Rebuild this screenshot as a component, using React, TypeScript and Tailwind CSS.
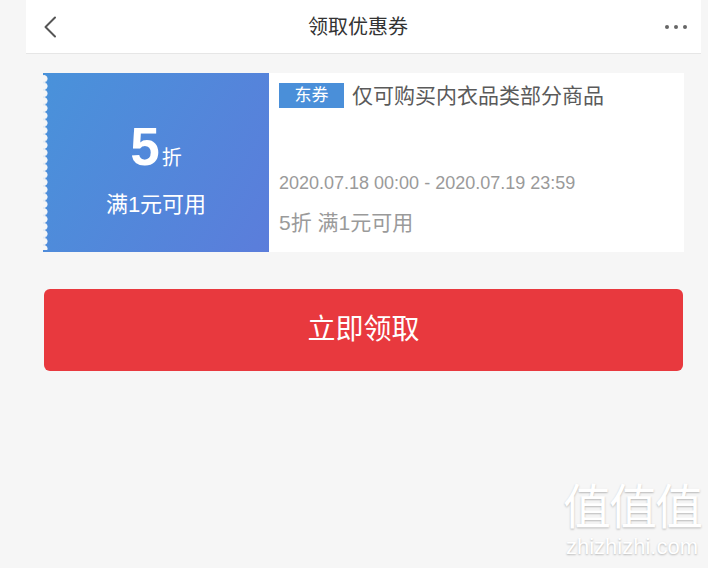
const cjk = "font-['Liberation_Sans','Noto_Sans_CJK_SC',sans-serif]";

export default function App() {
  return (
    <div className={`relative h-[568px] w-[708px] overflow-hidden bg-[#f6f6f6] ${cjk}`}>
      <div className="ml-[26px] w-[675px]">
        {/* Header */}
        <header className="flex h-[54px] items-center justify-between border-b border-[#e6e6e6] bg-white pl-[17px] pr-[14px]">
          <svg width="14" height="22" viewBox="0 0 14 22" fill="none" className="mt-[1px]">
            <polyline points="12,1.5 2.5,11 12,20.5" stroke="#555" strokeWidth="2" strokeLinecap="round" strokeLinejoin="round" />
          </svg>
          <h1 className="text-[20px] text-[#333]">领取优惠券</h1>
          <div className="flex w-[28px] items-center justify-end gap-[5px]">
            <span className="h-[4px] w-[4px] rounded-full bg-[#666]" />
            <span className="h-[4px] w-[4px] rounded-full bg-[#666]" />
            <span className="h-[4px] w-[4px] rounded-full bg-[#666]" />
          </div>
        </header>

        <div className="px-[17px] pt-[19px]">
          {/* Coupon */}
          <div className="flex h-[179px]">
            <div className="relative flex w-[226px] flex-col items-center justify-center bg-[linear-gradient(120deg,#4992da,#5b7ddb)] pt-[10px] text-white">
              <div className="absolute inset-y-[2px] left-0 w-[6px] bg-[radial-gradient(circle_at_1px_50%,#f6f6f6_3.2px,transparent_3.9px)] bg-[length:6px_7.4px]" />
              <div className="flex items-baseline">
                <span className="text-[53px] font-bold leading-none">5</span>
                <span className="ml-[2px] text-[20px] leading-none">折</span>
              </div>
              <div className="mt-[21px] text-[22px] leading-none">满1元可用</div>
            </div>
            <div className="flex flex-1 flex-col bg-white pl-[10px] pt-[10px]">
              <div className="flex items-center">
                <span className="flex h-[25px] w-[65px] items-center justify-center bg-[#4a8fd9] text-[17px] text-white">
                  东券
                </span>
                <span className="ml-[8px] text-[21px] leading-none text-[#5a5a5a]">
                  仅可购买内衣品类部分商品
                </span>
              </div>
              <div className="mt-[66px] text-[18px] leading-none text-[#9a9a9a]">
                2020.07.18 00:00 - 2020.07.19 23:59
              </div>
              <div className="mt-[20px] text-[21px] leading-none text-[#9a9a9a]">5折 满1元可用</div>
            </div>
          </div>

          {/* Button */}
          <button className="ml-px mt-[37px] flex h-[82px] w-[639px] items-center justify-center rounded-[6px] bg-[#e8393e] text-[28px] text-white">
            立即领取
          </button>
        </div>
      </div>

      {/* Watermark */}
      <div className="absolute right-[7px] top-[484px] flex flex-col items-center text-white [text-shadow:0_1px_2px_rgba(0,0,0,0.25)]">
        <span className="text-[48px] leading-none tracking-[-2px]">值值值</span>
        <span className="mt-[4px] text-[22px] leading-none">zhizhizhi.com</span>
      </div>
    </div>
  );
}
